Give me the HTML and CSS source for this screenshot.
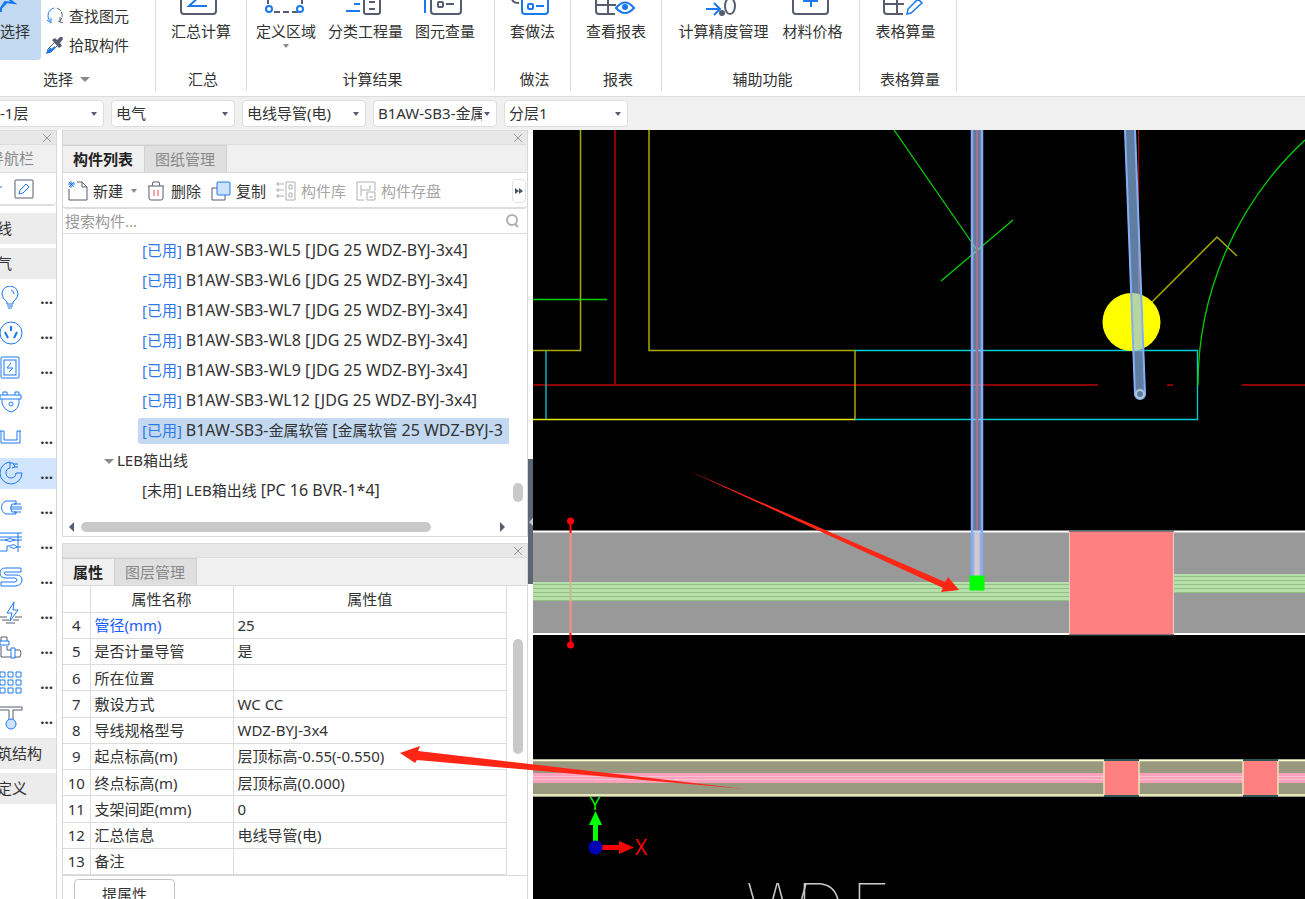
FILE: index.html
```html
<!DOCTYPE html>
<html lang="zh-CN">
<head>
  <meta charset="UTF-8">
  <meta name="viewport" content="width=device-width, initial-scale=1.0">
  <title>构件列表</title>
  <link rel="stylesheet" href="styles.css">
</head>
<body>
  <div class="app">
    <!-- Ribbon -->
    <header class="ribbon">
      <section class="group group-select">
        <div class="group-body">
          <button class="big-btn active">
            <svg class="icon" width="40" height="16"><path class="blue" d="M6 12V8L10 2L19 3L10 -4M6 8L11 3" stroke-width="2"/></svg>
            <span>选择</span>
          </button>
          <div class="small-btns">
            <button class="small-btn">
              <svg class="icon" width="20" height="20"><path class="blue" d="M9 2A8 8 0 0 0 5 15M2 14L6 17V12"/><path class="slate" d="M12 2A8 8 0 0 1 15 15M18 17L13 15M15 11V16" stroke-dasharray="5 1"/></svg>
              查找图元
            </button>
            <button class="small-btn">
              <svg class="icon" width="20" height="20"><path class="slate-fill" d="M7 5L10 3L12 5L15 2Q18 1 18 4L15 8L17 11L14 13Z"/><path class="slate" d="M11 6L3 14L2 18L6 17L14 9"/><path class="blue" d="M6 13L3 17L6 16L10 12" stroke-width="2"/></svg>
              拾取构件
            </button>
          </div>
        </div>
        <h2 class="group-title">选择 <i class="caret caret-big"></i></h2>
      </section>
      <section class="group group-sum">
        <div class="group-body">
          <button class="big-btn">
            <svg class="icon" width="60" height="16"><rect class="slate" x="10" y="-20" width="35" height="34" rx="3" stroke-width="2"/><path class="blue" d="M29 -4L18 6H36" stroke-width="2"/></svg>
            <span>汇总计算</span>
          </button>
        </div>
        <h2 class="group-title">汇总</h2>
      </section>
      <section class="group group-result">
        <div class="group-body">
          <button class="big-btn">
            <svg class="icon" width="60" height="16"><path class="slate" d="M12 -2V5M46 -2V5M18 12H42" stroke-width="2" stroke-dasharray="6 3"/><g class="blue" stroke-width="2"><circle cx="13" cy="9" r="3"/><circle cx="44" cy="9" r="3"/></g></svg>
            <span>定义区域</span>
            <i class="caret"></i>
          </button>
          <button class="big-btn">
            <svg class="icon" width="60" height="16"><path class="blue" d="M18 4H24M10 11H24" stroke-width="2"/><path class="slate" d="M28 -4V12Q28 14 30 14H42Q44 14 44 12V-4M33 2H39M33 9H39" stroke-width="2"/></svg>
            <span>分类工程量</span>
          </button>
          <button class="big-btn">
            <svg class="icon" width="60" height="16"><path class="blue" d="M10 -2V13" stroke-width="2"/><g class="slate" stroke-width="2"><rect x="16" y="-12" width="30" height="26" rx="3"/><rect x="23" y="2" width="5" height="5" rx="1"/><path d="M31 4H39"/></g></svg>
            <span>图元查量</span>
          </button>
        </div>
        <h2 class="group-title">计算结果</h2>
      </section>
      <section class="group group-method">
        <div class="group-body">
          <button class="big-btn">
            <svg class="icon" width="60" height="16"><path class="slate" d="M9 -2Q9 3 16 3" stroke-width="2"/><g class="blue" stroke-width="2"><rect x="19" y="-12" width="26" height="26" rx="3"/><rect x="25" y="4" width="5" height="5" rx="1"/><path d="M33 6H41"/></g></svg>
            <span>套做法</span>
          </button>
        </div>
        <h2 class="group-title">做法</h2>
      </section>
      <section class="group group-report">
        <div class="group-body">
          <button class="big-btn">
            <svg class="icon" width="60" height="16"><path class="slate" d="M10 -4V11Q10 14 13 14H29M22 -4V14M10 5H30" stroke-width="2"/><path class="blue" d="M30 8Q39 -3 48 8Q39 18 30 8Z" stroke-width="2"/><circle class="blue-fill" cx="39" cy="7" r="3"/></svg>
            <span>查看报表</span>
          </button>
        </div>
        <h2 class="group-title">报表</h2>
      </section>
      <section class="group group-aux">
        <div class="group-body">
          <button class="big-btn">
            <svg class="icon" width="60" height="16"><path class="blue" d="M13 9H27M21 3L27 9L21 15" stroke-width="2"/><circle class="slate-fill" cx="29" cy="13" r="3"/><ellipse class="slate" cx="37" cy="6" rx="5" ry="8" stroke-width="2"/></svg>
            <span>计算精度管理</span>
          </button>
          <button class="big-btn">
            <svg class="icon" width="60" height="16"><rect class="slate" x="10" y="-20" width="35" height="34" rx="3" stroke-width="2"/><path class="blue" d="M20 1H35M28 -5V7" stroke-width="2"/></svg>
            <span>材料价格</span>
          </button>
        </div>
        <h2 class="group-title">辅助功能</h2>
      </section>
      <section class="group group-table">
        <div class="group-body">
          <button class="big-btn">
            <svg class="icon" width="60" height="16"><path class="slate" d="M9 -4V11Q9 14 12 14H28M22 -4V14M9 4H29" stroke-width="2"/><path class="blue" d="M32 14L33 9L43 -1L47 3L36 13Z" stroke-width="1.5"/></svg>
            <span>表格算量</span>
          </button>
        </div>
        <h2 class="group-title">表格算量</h2>
      </section>
    </header>

    <!-- Filters -->
    <div class="filters">
      <div class="combo combo-floor"><select aria-label="楼层"><option>-1层</option></select></div>
      <div class="combo"><select aria-label="专业"><option>电气</option></select></div>
      <div class="combo"><select aria-label="构件类型"><option>电线导管(电)</option></select></div>
      <div class="combo"><select aria-label="构件"><option>B1AW-SB3-金属软管</option></select></div>
      <div class="combo"><select aria-label="分层"><option>分层1</option></select></div>
    </div>

    <main class="workspace">
      <!-- Navigation -->
      <nav class="nav">
        <div class="strip"><button class="close" aria-label="关闭"><svg class="icon" width="10" height="10"><path d="M1 1L9 9M9 1L1 9"/></svg></button></div>
        <div class="nav-head">导航栏</div>
        <div class="nav-tools">
          <svg class="icon" width="4" height="20"><path class="blue" d="M0 8H2"/></svg>
          <button aria-label="编辑"><svg class="icon" width="20" height="20"><rect class="slate" x="1" y="1" width="18" height="18" rx="1"/><path class="blue" d="M5 15L6 11L12 5L15 8L9 14Z"/></svg></button>
        </div>
        <div class="nav-list">
          <button class="nav-group">线</button>
          <button class="nav-group">气</button>
          <button class="nav-item"><svg class="icon blue" width="24" height="24"><path d="M7 18V16Q2 12 2 8A8 8 0 0 1 18 8Q18 12 13 16V18ZM7 20H13M8 22H12M11 4Q14 5 14 8"/></svg><b>...</b></button>
          <button class="nav-item"><svg class="icon blue" width="24" height="24"><circle cx="11" cy="12" r="11"/><path d="M11 5V10M5 11L8 17M17 11L14 17" stroke-width="2"/></svg><b>...</b></button>
          <button class="nav-item"><svg class="icon blue" width="24" height="24"><rect x="1" y="1" width="18" height="21" rx="1"/><rect x="4" y="4" width="12" height="15"/><path d="M11 7L7 12H13L9 16"/></svg><b>...</b></button>
          <button class="nav-item"><svg class="icon blue" width="24" height="24"><path d="M0 4H21V8H0ZM3 4V1H7V4M15 4V1H19V4M2 8V12Q4 19 11 21Q18 19 19 12V8"/><circle cx="11" cy="13" r="2"/></svg><b>...</b></button>
          <button class="nav-item"><svg class="icon blue" width="24" height="24"><path d="M0 5H4V14H17V5H21M1 5V17H20V5"/></svg><b>...</b></button>
          <button class="nav-item current"><svg class="icon blue" width="24" height="24"><path d="M10 1A11 11 0 1 0 22 12H16A5 5 0 1 1 10 7M10 1V7M10 2H13L15 6L12 7M13 3H18M15 6H18"/></svg><b>...</b></button>
          <button class="nav-item"><svg class="icon blue" width="24" height="24"><path d="M11 5H6A7 7 0 0 0 6 18H16M11 5H16V8H12Q9 12 12 16H16V18M14 8H21M11 11H22M11 13H22M14 16H21"/></svg><b>...</b></button>
          <button class="nav-item"><svg class="icon blue" width="24" height="24"><path d="M0 2H22M0 6H22M0 9H5Q10 6 15 9H22M5 9Q10 12 15 9M18 2V21M0 20H7V15H10Q14 12 17 16H21M10 16Q14 19 17 16"/></svg><b>...</b></button>
          <button class="nav-item"><svg class="icon blue" width="24" height="24"><path d="M21 2H6Q0 2 0 7T6 12H14Q17 12 17 14T14 16H1M21 6H6Q4 6 4 7T6 9H16Q22 9 22 14T16 20H1M21 2V6M1 16V20"/></svg><b>...</b></button>
          <button class="nav-item"><svg class="icon" width="24" height="24"><path class="slate" d="M0 16H7M15 16H22M2 19H9M13 19H19M6 22H15"/><path class="blue" d="M14 1L7 12H12L10 20L18 9H13Z"/></svg><b>...</b></button>
          <button class="nav-item"><svg class="icon" width="24" height="24"><path class="slate" d="M1 5V1H7V5M1 10V21H11M7 10V14H11M15 14H20Q22 17 20 21H15"/><path class="blue" d="M0 5H9V9H0ZM11 12H15V22H11Z"/></svg><b>...</b></button>
          <button class="nav-item"><svg class="icon blue" width="24" height="24"><path d="M0 1H5V6H0ZM8 1H13V6H8ZM16 1H21V6H16ZM0 9H5V14H0ZM8 9H13V14H8ZM16 9H21V14H16ZM0 17H5V22H0ZM8 17H13V22H8ZM16 17H21V22H16Z"/></svg><b>...</b></button>
          <button class="nav-item"><svg class="icon" width="24" height="24"><path class="slate" d="M0 1H22V4H13V14M0 4H9V14"/><circle class="blue soft" cx="11" cy="18" r="5"/></svg><b>...</b></button>
          <button class="nav-group">筑结构</button>
          <button class="nav-group">定义</button>
        </div>
      </nav>

      <div class="panels">
        <!-- Component list -->
        <section class="panel list-panel">
          <div class="strip"><button class="close" aria-label="关闭"><svg class="icon" width="10" height="10"><path d="M1 1L9 9M9 1L1 9"/></svg></button></div>
          <div class="tabs">
            <button class="tab selected">构件列表</button>
            <button class="tab">图纸管理</button>
          </div>
          <div class="toolbar">
            <button class="tool"><svg class="icon" width="20" height="20"><path class="slate" d="M9 1H14L19 6V19H1V8M14 1V6H19"/><path class="blue" d="M1 1L6 6M6 1L1 6M3 0V7M0 3H7"/></svg>新建<i class="caret"></i></button>
            <button class="tool"><svg class="icon" width="19" height="20"><path class="slate" d="M1 5H17M5 5L6 1H12L13 5M2 5V17Q2 19 4 19H14Q16 19 16 17V5"/><path class="red" d="M7 9V15M11 9V15"/></svg>删除</button>
            <button class="tool"><svg class="icon" width="20" height="20"><path class="slate" d="M6 7H1V19H14V14"/><rect class="blue soft" x="6" y="1" width="13" height="13" rx="1"/></svg>复制</button>
            <button class="tool" disabled><svg class="icon" width="20" height="20"><path d="M10 1H19V19H10ZM13 4H16V8H13ZM13 12H16V16H13ZM4 3H8M4 9H8M4 15H8M1 2H3V4H1ZM1 8H3V10H1ZM1 14H3V16H1Z"/></svg>构件库</button>
            <button class="tool" disabled><svg class="icon" width="20" height="20"><path d="M8 19H1V1H19V10M5 4V15M5 9H14M14 4V9M11 11H19V19H11ZM13 16H17"/></svg>构件存盘</button>
            <button class="more" aria-label="更多"><svg width="10" height="6"><path d="M1 0L5 3L1 6ZM5 0L9 3L5 6Z" fill="#4b5368"/></svg></button>
          </div>
          <div class="search">
            <input type="text" placeholder="搜索构件..." aria-label="搜索构件">
            <svg class="icon" width="14" height="14"><circle cx="7" cy="6" r="5" stroke-width="2"/><path d="M10 10L13 13" stroke-width="2"/></svg>
          </div>
          <div class="tree-box">
            <ul class="tree">
              <li><span><em>[已用]</em> <b>B1AW-SB3-WL5 [JDG 25 WDZ-BYJ-3x4]</b></span></li>
              <li><span><em>[已用]</em> <b>B1AW-SB3-WL6 [JDG 25 WDZ-BYJ-3x4]</b></span></li>
              <li><span><em>[已用]</em> <b>B1AW-SB3-WL7 [JDG 25 WDZ-BYJ-3x4]</b></span></li>
              <li><span><em>[已用]</em> <b>B1AW-SB3-WL8 [JDG 25 WDZ-BYJ-3x4]</b></span></li>
              <li><span><em>[已用]</em> <b>B1AW-SB3-WL9 [JDG 25 WDZ-BYJ-3x4]</b></span></li>
              <li><span><em>[已用]</em> <b>B1AW-SB3-WL12 [JDG 25 WDZ-BYJ-3x4]</b></span></li>
              <li class="selected"><span><em>[已用]</em> <b>B1AW-SB3-</b>金属软管 <b>[</b>金属软管 <b>25 WDZ-BYJ-3</b></span></li>
              <li class="parent"><i class="caret caret-big"></i><span>LEB箱出线</span></li>
              <li><span>[未用] LEB箱出线 <b>[PC 16 BVR-1*4]</b></span></li>
            </ul>
            <div class="vbar"><i class="thumb thumb-tree"></i></div>
            <div class="hbar"><i class="arrow-left"></i><div class="track"><i class="thumb-h"></i></div><i class="arrow-right"></i></div>
          </div>
        </section>

        <!-- Properties -->
        <section class="panel prop-panel">
          <div class="strip"><button class="close" aria-label="关闭"><svg class="icon" width="10" height="10"><path d="M1 1L9 9M9 1L1 9"/></svg></button></div>
          <div class="tabs">
            <button class="tab selected">属性</button>
            <button class="tab">图层管理</button>
          </div>
          <div class="prop-body">
            <table class="props">
              <thead><tr><th class="num"></th><th class="name">属性名称</th><th>属性值</th></tr></thead>
              <tbody>
                <tr><td>4</td><td class="link">管径(mm)</td><td>25</td></tr>
                <tr><td>5</td><td>是否计量导管</td><td>是</td></tr>
                <tr><td>6</td><td>所在位置</td><td></td></tr>
                <tr><td>7</td><td>敷设方式</td><td>WC CC</td></tr>
                <tr><td>8</td><td>导线规格型号</td><td>WDZ-BYJ-3x4</td></tr>
                <tr><td>9</td><td>起点标高(m)</td><td>层顶标高-0.55(-0.550)</td></tr>
                <tr><td>10</td><td>终点标高(m)</td><td>层顶标高(0.000)</td></tr>
                <tr><td>11</td><td>支架间距(mm)</td><td>0</td></tr>
                <tr><td>12</td><td>汇总信息</td><td>电线导管(电)</td></tr>
                <tr><td>13</td><td>备注</td><td></td></tr>
              </tbody>
            </table>
            <div class="vbar"><i class="thumb thumb-props"></i></div>
          </div>
          <button class="extract">提属性</button>
        </section>
      </div>

      <div class="splitter"><i></i></div>

      <!-- Drawing -->
      <div class="canvas">
        <svg class="drawing" width="100%" height="100%">
          <defs>
            <pattern id="wires" patternUnits="userSpaceOnUse" x="0" y="582" width="8" height="4">
              <rect width="8" height="4" fill="#b5e0aa"/>
              <rect y="2" width="8" height="1" fill="#8fc283"/>
            </pattern>
          </defs>
          <g transform="translate(-533 -130)" fill="none">
            <!-- walls and axes -->
            <g stroke="#8c0000" stroke-width="2">
              <path d="M615 130V385M533 385H1098M1167 385H1173M1242 385H1305"/>
              <path d="M1138.5 130V350" stroke="#b00000" stroke-width="1"/>
            </g>
            <g stroke="#a8a800" stroke-width="1.5">
              <path d="M533 350.5H580.5V130M649 130V350.5H855V419"/>
              <path d="M533 419.5H855" stroke="#e6e600"/>
              <path d="M1152 302L1217 237L1237 256"/>
            </g>
            <path d="M546 351V419M855 350.5H1197.5V419.5H855" stroke="#00d0d0" stroke-width="1.3"/>
            <g stroke="#00d000" stroke-width="1.3">
              <path d="M533 299.5H607M894 130L977 250M941 281L1013 220"/>
              <path d="M1198 385A334 334 0 0 1 1305 140"/>
            </g>
            <circle cx="1131.5" cy="322" r="29" fill="#ffff00"/>

            <!-- cable tray -->
            <rect x="533" y="531" width="772" height="104" fill="#999"/>
            <path d="M533 531.5H1305M533 634H1305" stroke="#fff" stroke-width="2"/>
            <rect x="533" y="582" width="536" height="19" fill="url(#wires)"/>
            <rect x="1174" y="574" width="131" height="19" fill="url(#wires)"/>
            <rect x="1069" y="531" width="105" height="104" fill="#ff8080"/>
            <path d="M1069 531H1174M1069 635H1174" stroke="#1d6060"/>
            <path d="M1069.5 532V634M1173.5 532V634" stroke="#e6cccc"/>
            <path d="M570.5 521V533M570.5 633V644" stroke="#ff0000" stroke-width="2"/>
            <path d="M570.5 533V582M570.5 601V633" stroke="#ff8c8c" stroke-width="2"/>
            <path d="M570.5 582V601" stroke="#ceb494" stroke-width="2"/>
            <circle cx="570.5" cy="521" r="3.5" fill="#ff0010"/>
            <circle cx="570.5" cy="645" r="3.5" fill="#ff0010"/>

            <rect x="533" y="759" width="772" height="38" fill="#999980"/>
            <path d="M533 760.5H1305M533 795H1305" stroke="#ffffd0" stroke-width="1.5"/>
            <path d="M533 778H1305" stroke="#ffa0bc" stroke-width="10"/>
            <path d="M533 776.5H1305M533 779.5H1305" stroke="#f2c2d0"/>
            <path d="M1104 759H1139V797H1104ZM1243 759H1278V797H1243Z" fill="#ff8080"/>
            <path d="M1104 760H1139M1243 760H1278M1104 796H1139M1243 796H1278" stroke="#2b5757" stroke-width="2"/>
            <path d="M1104 761V795M1139 761V795M1243 761V795M1278 761V795" stroke="#f2e2b8" stroke-width="1.5"/>

            <!-- conduits -->
            <rect x="971" y="130" width="12" height="447" fill="#a9c9ff" fill-opacity=".6"/>
            <path d="M977 130V530" stroke="#a57094" stroke-width="2"/>
            <path d="M977 533V576" stroke="#d3c8d0" stroke-width="5"/>
            <path d="M972 130V577M982 130V577" stroke="#82acf5" stroke-width="2.5"/>
            <path d="M1130 130L1140 394" stroke="#92bef8" stroke-opacity=".65" stroke-width="11" stroke-linecap="round"/>
            <path d="M1125 130L1135 394A5 5 0 0 0 1145 394L1135 130" stroke="#86aef5" stroke-width="2"/>
            <circle cx="1140" cy="394" r="4" stroke="#a9cbd6" stroke-width="2"/>
            <rect x="969.5" y="575.5" width="15" height="15" fill="#00ff00"/>

            <!-- coordinate axes -->
            <path d="M595.5 842V824" stroke="#00ff00" stroke-width="5"/>
            <path d="M589 825L595.5 811L602 825Z" fill="#00ff00"/>
            <path d="M601 847.5H620" stroke="#ff0000" stroke-width="5"/>
            <path d="M619 841L634 847.5L619 854Z" fill="#ff0000"/>
            <circle cx="595.5" cy="847.5" r="7" fill="#0000b4"/>
            <text class="axis" x="595" y="810" fill="#00f000" text-anchor="middle">Y</text>
            <text class="axis axis-x" x="641" y="855" fill="#ff0000" text-anchor="middle">X</text>
            <text class="cad" x="746 796 851" y="933" fill="#c8c8c8">WDF</text>
          </g>
        </svg>
      </div>
    </main>

    <!-- Pointer arrows over the panels and the drawing -->
    <svg class="marks" width="100%" height="100%" fill="#ff2616">
      <path d="M687 470L945 582L948 577L959 590L941 592L943 588Z"/>
      <path d="M745 789L417 760L415 763L400 753L420 746L418 751Z"/>
    </svg>
  </div>
</body>
</html>
```
FILE: styles.css
```css
* {
  box-sizing: border-box;
}

body {
  margin: 0;
  font-family: "Noto Sans", "Noto Sans CJK SC", sans-serif;
  font-size: 15px;
  line-height: 20px;
  color: #333;
  background: #fff;
}

button, input, select {
  font: inherit;
  color: inherit;
  margin: 0;
  padding: 0;
  border: 0;
  background: none;
}

.app {
  position: relative;
  display: flex;
  flex-direction: column;
  height: 100vh;
  overflow: hidden;
}

/* icons */
.icon {
  flex: none;
  fill: none;
  stroke: #b0b0b0;
}

.blue { stroke: #1a78f0; fill: none; }
.slate { stroke: #565d70; fill: none; }
.red { stroke: #e5484d; }
.soft { fill: #cfe2fb; }
.blue-fill { fill: #1a78f0; stroke: none; }
.slate-fill { fill: #565d70; stroke: none; }

.caret {
  border: 3px solid transparent;
  border-top: 4px solid #8a8a8a;
  border-bottom: 0;
}

.caret-big {
  border-width: 5px 5px 0;
}

/* ribbon */
.ribbon {
  display: flex;
  flex: none;
  height: 97px;
  padding-bottom: 5px;
  border-bottom: 1px solid #dcdcdc;
}

.group {
  display: flex;
  flex-direction: column;
  justify-content: space-between;
  border-right: 1px solid #dcdcdc;
}

.group-select { width: 156px; }
.group-sum { width: 91px; }
.group-result { width: 248px; }
.group-method { width: 76px; }
.group-report { width: 91px; }
.group-aux { width: 198px; }
.group-table { width: 97px; }

.group-body {
  display: flex;
  justify-content: center;
  gap: 14px;
}

.group-select .group-body {
  justify-content: flex-start;
  gap: 4px;
}

.group-result .group-body {
  justify-content: flex-start;
  gap: 12px;
  padding-left: 9px;
}

.group-table .group-body {
  padding-right: 5px;
}

.group-title {
  display: flex;
  justify-content: center;
  align-items: center;
  gap: 7px;
  margin: 0;
  padding: 0 0 2px 4px;
  font-size: 15px;
  font-weight: normal;
}

.group-select .group-title {
  padding: 0 22px 2px 0;
}

.big-btn {
  display: flex;
  flex-direction: column;
  align-items: center;
  white-space: nowrap;
}

.big-btn span {
  margin-top: 5px;
}

.big-btn .caret {
  margin-top: 3px;
}

.big-btn.active {
  width: 41px;
  height: 60px;
  padding-right: 11px;
  background: #c2d9f1;
  border-radius: 0 0 4px 0;
}

.small-btn {
  display: flex;
  align-items: center;
  gap: 4px;
  height: 29px;
}

.small-btns {
  padding-top: 1px;
}

/* filter bar */
.filters {
  display: flex;
  flex: none;
  align-items: center;
  gap: 7px;
  height: 33px;
  margin-left: -20px;
  background: #f0f0f0;
}

.combo {
  position: relative;
  width: 124px;
}

.combo select {
  appearance: none;
  width: 100%;
  height: 27px;
  padding: 0 14px 2px 4px;
  background: #fff;
  border: 1px solid #ddd;
  border-radius: 4px;
  overflow: hidden;
}

.combo-floor select {
  padding-left: 19px;
}

.combo::after {
  content: "";
  position: absolute;
  right: 7px;
  top: 12px;
  border: 3px solid transparent;
  border-top: 4px solid #565d70;
  border-bottom: 0;
}

/* workspace */
.workspace {
  display: flex;
  flex: 1;
  min-height: 0;
}

.strip {
  display: flex;
  flex: none;
  justify-content: flex-end;
  align-items: center;
  height: 15px;
  padding-right: 4px;
  background: #e7e7e7;
  border-top: 1px solid #ddd;
  border-bottom: 1px solid #ddd;
}

.close {
  display: flex;
}

.close .icon {
  stroke: #999;
}

/* navigation */
.nav {
  flex: none;
  width: 57px;
  border-right: 1px solid #d8d8d8;
  overflow: hidden;
}

.nav-head {
  display: flex;
  justify-content: flex-end;
  align-items: center;
  height: 28px;
  padding: 0 22px 2px 0;
  background: #f0f0f0;
  border-bottom: 1px solid #ddd;
  color: #888;
  white-space: nowrap;
}

.nav-tools {
  display: flex;
  align-items: center;
  gap: 10px;
  height: 33px;
  border-bottom: 2px solid #ddd;
  border-radius: 0 0 4px 0;
}

.nav-tools button {
  display: flex;
}

.nav-list {
  display: flex;
  flex-direction: column;
  gap: 4px;
  padding-top: 7px;
}

.nav-group,
.nav-item {
  display: flex;
  justify-content: space-between;
  align-items: center;
  height: 31px;
  padding: 0 3px 2px 0;
}

.nav-group {
  background: #ececec;
  text-indent: -3px;
}

.nav-item.current {
  background: #d1e5ff;
}

/* docked panels */
.panels {
  display: flex;
  flex: none;
  flex-direction: column;
  gap: 6px;
  width: 466px;
  margin-left: 5px;
}

.panel {
  border: solid #d8d8d8;
  border-width: 0 1px;
}

.tabs {
  display: flex;
  height: 28px;
  background: #f0f0f0;
  border-bottom: 1px solid #d8d8d8;
}

.tab {
  padding: 0 11px 0 10px;
  background: #dfdfdf;
  border: 1px solid #ccd2d6;
  border-width: 1px 1px 0 0;
  color: #888;
}

.tab.selected {
  background: #f0f0f0;
  color: #222;
  font-weight: bold;
}

.toolbar {
  display: flex;
  align-items: center;
  gap: 10px;
  height: 36px;
  padding: 2px 1px 0 5px;
  border-bottom: 2px solid #ddd;
  border-radius: 0 0 4px 4px;
}

.tool {
  display: flex;
  align-items: center;
  gap: 5px;
}

.tool .caret {
  margin-left: 3px;
}

.tool:disabled {
  color: #a6a6a6;
}

.more {
  display: flex;
  justify-content: center;
  align-items: center;
  width: 14px;
  height: 24px;
  margin-left: auto;
  border: 1px solid #e2e2e2;
  border-radius: 4px;
}

.search {
  display: flex;
  align-items: center;
  height: 25px;
  padding: 0 8px 0 2px;
  border-bottom: 1px solid #ddd;
}

.search input {
  flex: 1;
  outline: 0;
}

.search input::placeholder {
  color: #999;
  opacity: 1;
}

.tree-box {
  display: grid;
  grid-template-columns: 1fr 18px;
  grid-template-rows: 283px 19px;
  border-bottom: 1px solid #d8d8d8;
}

.tree {
  margin: 0;
  padding: 2px 0 0;
  list-style: none;
  min-width: 0;
}

.tree li {
  display: flex;
  align-items: center;
  height: 30px;
  padding-left: 75px;
}

.tree span {
  flex: 1;
  height: 26px;
  padding-left: 4px;
  line-height: 24px;
  white-space: nowrap;
  overflow: hidden;
}

.tree em {
  font-style: normal;
  color: #2f78ea;
}

.tree b {
  font-size: 16px;
  font-weight: normal;
}

.tree .selected span {
  background: #c2d9f1;
  border-radius: 3px 0 0 3px;
}

.tree .parent {
  padding-left: 41px;
}

.tree .parent span {
  padding-left: 3px;
}

.vbar {
  display: flex;
  justify-content: center;
}

.thumb {
  width: 10px;
  border-radius: 5px;
  background: #c9c9c9;
}

.thumb-tree {
  height: 19px;
  margin-top: 249px;
}

.hbar {
  display: flex;
  align-items: center;
  gap: 7px;
  padding: 0 4px 0 6px;
}

.track {
  flex: 1;
}

.thumb-h {
  display: block;
  width: 85%;
  height: 10px;
  border-radius: 5px;
  background: #c9c9c9;
}

.arrow-left,
.arrow-right {
  border: 5px solid transparent;
}

.arrow-left {
  border-left: 0;
  border-right-color: #565d70;
}

.arrow-right {
  border-right: 0;
  border-left-color: #565d70;
}

/* properties */
.prop-body {
  display: grid;
  grid-template-columns: 1fr 20px;
  border-bottom: 1px solid #d8d8d8;
}

.prop-body .vbar {
  padding-left: 2px;
}

.props {
  width: 100%;
  height: 289px;
  border-collapse: collapse;
  table-layout: fixed;
}

.props th,
.props td {
  padding: 0 4px;
  border: 1px solid #dcdcdc;
  border-top: 0;
  border-left: 0;
  font-weight: normal;
  white-space: nowrap;
}

.props th {
  height: 26px;
}

.props td:first-child {
  padding: 0;
  text-align: center;
}

.props .num { width: 27px; }
.props .name { width: 143px; }
.props .link { color: #1a5cff; }

.thumb-props {
  height: 115px;
  margin-top: 53px;
}

.extract {
  width: 101px;
  height: 30px;
  margin: 3px 0 0 11px;
  border: 1px solid #c4c4c4;
  border-radius: 4px;
}

.splitter {
  display: flex;
  flex: none;
  width: 5px;
  padding-top: 329px;
}

.splitter i {
  display: flex;
  justify-content: flex-end;
  align-items: center;
  width: 5px;
  height: 125px;
  background: #5d6675;
}

.splitter i::after {
  content: "";
  border: 4px solid transparent;
  border-right-color: #c4c9d0;
  border-left: 0;
}

/* drawing area */
.canvas {
  flex: 1;
  min-width: 0;
  background: #000;
}

.drawing {
  display: block;
}

.axis {
  font-family: "Open Sans", sans-serif;
  font-size: 19px;
}

.axis-x {
  font-size: 21px;
}

.cad {
  font-family: Inter, Roboto, sans-serif;
  font-size: 68px;
  font-weight: 100;
}

.marks {
  position: absolute;
  inset: 0;
  pointer-events: none;
}
```
